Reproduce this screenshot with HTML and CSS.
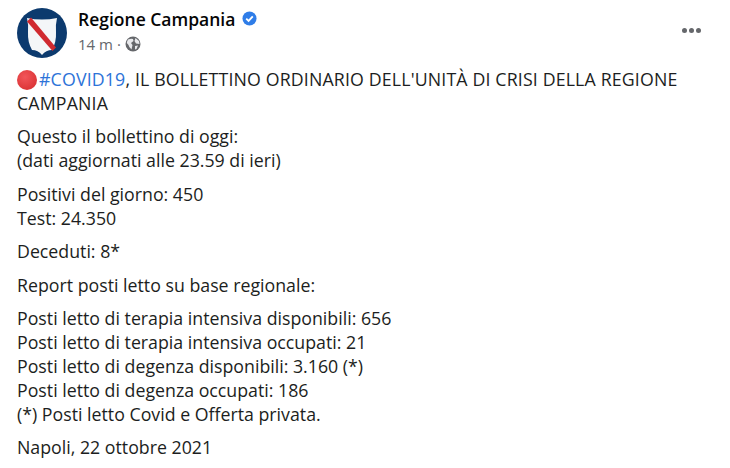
FILE: index.html
```html
<!DOCTYPE html>
<html lang="it">
<head>
<meta charset="utf-8">
<title>Regione Campania</title>
<link rel="stylesheet" href="styles.css">
</head>
<body>
<article class="post">
  <header class="head">
    <svg class="avatar" viewBox="0 0 50 50" aria-hidden="true">
      <circle cx="25" cy="25" r="25" fill="#0c3a6e"/>
      <path d="M10 10 Q25 13 40 10 Q38.500 16 39 24 Q39.500 34 35 42 Q29 42 25 47 Q21 42 15 42 Q10.500 34 11 24 Q11.500 16 10 10Z" fill="#f4f6f8"/>
      <path d="M10 13.500 L14 9.500 L39 39.500 L35.500 43Z" fill="#d02a30"/>
    </svg>
    <div class="who">
      <div class="name-row">
        <span class="name">Regione Campania</span>
        <svg class="badge" viewBox="0 0 16 16" aria-hidden="true">
          <circle cx="8" cy="8" r="7.500" fill="#2f7de8"/>
          <path d="M4.500 8.200 L7 10.600 L11.500 5.800" fill="none" stroke="#fff" stroke-width="2"/>
        </svg>
      </div>
      <div class="meta">
        <span>14 m</span><span class="sep">·</span>
        <svg class="globe" viewBox="0 0 16 16" aria-hidden="true">
          <circle cx="8" cy="8" r="7.500" fill="#65676b"/>
          <path d="M3 3.500 Q6 2.500 8 3 L8.500 5 L6 7 L7.500 9 L6.500 13.500 Q4 11.500 3.500 9 L1.800 7 Q2 5 3 3.500Z M10.500 2 L14 5 L14.500 8 L11 7.500 L9.500 5Z M10 10 L13 9.500 L11.500 13 L10 13.500Z" fill="#e8e9ec"/>
        </svg>
      </div>
    </div>
    <div class="more" aria-label="Altro"><i></i><i></i><i></i></div>
  </header>
  <div class="body">
    <p class="title"><span class="dot"></span><span class="tag">#COVID19</span>, IL BOLLETTINO ORDINARIO DELL'UNITÀ DI CRISI DELLA REGIONE CAMPANIA</p>
    <p>Questo il bollettino di oggi:<br>(dati aggiornati alle 23.59 di ieri)</p>
    <p>Positivi del giorno: 450<br>Test: 24.350</p>
    <p>Deceduti: 8*</p>
    <p>Report posti letto su base regionale:</p>
    <p>Posti letto di terapia intensiva disponibili: 656<br>Posti letto di terapia intensiva occupati: 21<br>Posti letto di degenza disponibili: 3.160 (*)<br>Posti letto di degenza occupati: 186<br>(*) Posti letto Covid e Offerta privata.</p>
    <p>Napoli, 22 ottobre 2021</p>
  </div>
</article>
</body>
</html>
```
FILE: styles.css
```css
html, body { margin: 0; padding: 0; background: #fff; }
body { width: 730px; height: 468px; overflow: hidden; font-family: "Open Sans", "Noto Sans", sans-serif; color: #1c1e21; }
.post { padding: 8px 17px 0; }
.head { display: flex; align-items: flex-start; }
.avatar { width: 50px; height: 50px; flex: none; margin-right: 11px; }
.who { flex: 1; }
.name-row { display: flex; align-items: center; height: 22px; }
.name { font-size: 17.500px; font-weight: 600; color: #050505; }
.badge { width: 15px; height: 15px; margin-left: 7px; margin-top: -2px; }
.meta { display: flex; align-items: center; font-size: 15px; color: #65676b; margin-top: 4px; height: 20px; }
.sep { margin: 0 4px; }
.globe { width: 16px; height: 16px; }
.more { display: flex; gap: 2px; margin: 20px 12px 0 0; }
.more i { width: 5px; height: 5px; border-radius: 50%; background: #65676b; }
.body { margin-top: 10px; font-size: 17.750px; line-height: 23.800px; }
.body p { margin: 0 0 9.800px; width: 680px; }
.body .title { letter-spacing: 0.150px; }
.tag { color: #2d73d8; }
.dot { display: inline-block; width: 20px; height: 20px; border-radius: 50%; background: radial-gradient(circle at 40% 35%, #f2555a, #d42a2a); vertical-align: -4px; margin-right: 2px; }
```
